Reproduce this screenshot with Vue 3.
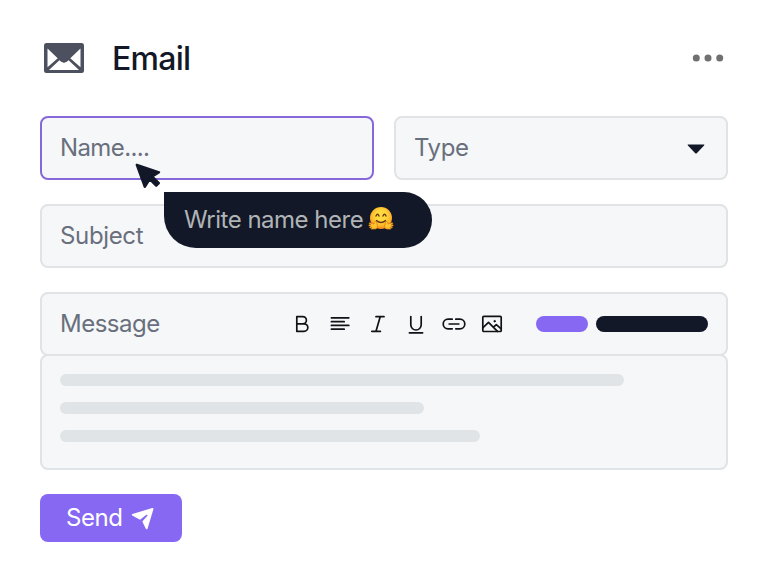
<script setup>
const lines = [564, 364, 420]
</script>

<template>
  <main class="page">
    <header class="header">
      <svg class="mail" width="40" height="30" viewBox="0 0 40 30">
        <rect width="40" height="30" rx="2.5" fill="#4c505f" />
        <path d="M3.5 5.4 13.7 15.2 3.5 24.2ZM36.5 5.4 26.3 15.2 36.5 24.2ZM5 27 15.4 17.2 17.6 18.9Q18.7 19 20 20 21.3 19 22.4 18.9L24.6 17.2 35 27Z" fill="#fff" />
      </svg>
      <h1>Email</h1>
      <svg class="more" width="32" height="8" viewBox="0 0 32 8" fill="#707070">
        <circle cx="4.3" cy="4" r="3.5" /><circle cx="16" cy="4" r="3.5" /><circle cx="27.7" cy="4" r="3.5" />
      </svg>
    </header>

    <div class="row">
      <div class="field active">
        <span class="name">Name....</span>
        <div class="hint">
          <svg class="cursor" width="28" height="28" viewBox="0 0 28 28">
            <path d="M2.8 2.8 25 10.3 18.3 14.6 24.8 21.1 22.2 23.7 15.7 17.2 10.8 24.8Z" fill="#121827" stroke="#121827" stroke-width="2.4" stroke-linejoin="round" />
          </svg>
          <div class="bubble">
            <span>Write name here</span>
            <svg width="26" height="26" viewBox="0 0 26 26">
              <defs>
                <radialGradient id="face" cx=".5" cy=".4" r=".6">
                  <stop offset=".4" stop-color="#ffd83e" /><stop offset=".75" stop-color="#ffb52b" /><stop offset="1" stop-color="#ed801b" />
                </radialGradient>
              </defs>
              <circle cx="13" cy="12" r="11" fill="url(#face)" />
              <path d="M8 10q1.5-3.4 3 0M15 10q1.5-3.4 3 0M8.5 14.6q4.5 3.8 9 0" fill="none" stroke="#6b3812" stroke-width="1.4" stroke-linecap="round" />
              <g fill="#ffc52e" stroke="#d97914" stroke-width=".7" stroke-linejoin="round">
                <path d="M7.5 15.5c-1.2-.1-1.1 1.2-1.7 2.5L2 16.8c-1-.2-1.2.7-.4 1.1l1.5.8-1.7.1c-1 .1-.9 1.1 0 1.2l1.8.2-1.3.7c-.7.6-.1 1.2.6 1l1.5-.3-.7.9c-.3.7.4 1 1 .6 2.1-.1 4.6.4 5.1-2.1.2-1.8-.8-5.4-1.9-5.5Z" />
                <path d="M18.5 15.5c1.2-.1 1.1 1.2 1.7 2.5l3.8-1.2c1-.2 1.2.7.4 1.1l-1.5.8 1.7.1c1 .1.9 1.1 0 1.2l-1.8.2 1.3.7c.7.6.1 1.2-.6 1l-1.5-.3.7.9c.3.7-.4 1-1 .6-2.1-.1-4.6.4-5.1-2.1-.2-1.8.8-5.4 1.9-5.5Z" />
              </g>
            </svg>
          </div>
        </div>
      </div>
      <div class="field">
        <span class="type">Type</span>
        <svg class="caret" width="18" height="10" viewBox="0 0 18 10"><path d="M1.2 .5H16.8Q18 .5 17.1 1.4L10 8.9Q9 9.9 8 8.9L.9 1.4Q0 .5 1.2 .5Z" fill="#121827" /></svg>
      </div>
    </div>

    <div class="field subject"><span>Subject</span></div>

    <section class="message">
      <div class="field">
        <span class="label">Message</span>
        <div class="tools">
          <svg viewBox="0 0 24 24"><path d="M6.8 4.6h6a3.6 3.6 0 0 1 0 7.2h-6ZM6.8 11.8h7.3a3.75 3.75 0 0 1 0 7.5H6.8Z" /></svg>
          <svg viewBox="0 0 24 24"><path d="M3.4 5.8h17.4M3.4 9.7h12.8M3.4 13.4h17.4M3.4 17.2h12.8" /></svg>
          <svg viewBox="0 0 24 24"><path d="M10 4.7h8M5.8 19.3h8.6M14.2 4.7 10 19.3" /></svg>
          <svg viewBox="0 0 24 24"><path d="M6.8 4.6v8.2a5.2 5.2 0 0 0 10.4 0V4.6M5.4 20.8h13.2" /></svg>
          <svg viewBox="0 0 24 24"><path d="M10.2 7.2H6a4.8 4.8 0 0 0 0 9.6h4.2M13.8 7.2H18a4.8 4.8 0 0 1 0 9.6h-4.2M7.2 12h9.6" /></svg>
          <svg viewBox="0 0 24 24"><rect x="2.8" y="4.3" width="18.4" height="15.2" rx="1" /><path d="m3 15.6 5.5-5.2 9 9M13.5 15.2l2.8-2.6 4.9 4.3" /><circle cx="14.6" cy="9.2" r=".8" class="dot" /></svg>
        </div>
        <i class="pill violet"></i>
        <i class="pill dark"></i>
      </div>
      <div class="body">
        <i v-for="width in lines" :key="width" :style="{ width: width + 'px' }"></i>
      </div>
    </section>

    <button class="send">
      <span>Send</span>
      <svg width="24" height="24" viewBox="0 0 24 24">
        <path d="M1.2 9.4Q.1 8.4 1.5 8L21.2 2Q22.8 1.6 22.4 3.2L16.6 22.4Q15.9 24 14.8 22.7L11.3 15.4 16.4 9.7Q16.9 8.4 15.4 8.8L9 13.7Z" fill="#fff" />
      </svg>
    </button>
  </main>
</template>

<style>
body { margin: 0; background: #fff; }
</style>

<style scoped>
* { box-sizing: border-box; }
svg { display: block; flex: none; }
.page { width: 768px; height: 574px; padding: 32px 40px; display: flex; flex-direction: column; font-family: Inter, "Liberation Sans", sans-serif; font-size: 24px; letter-spacing: -.42px; color: #6a6f7d; }
.header { height: 52px; padding: 0 4px; display: flex; align-items: center; margin-bottom: 32px; }
h1 { flex: 1; margin: 0 0 0 28px; padding-top: 2px; font-size: 32px; line-height: 40px; font-weight: 500; letter-spacing: -.75px; color: #121827; }
.row { display: flex; gap: 20px; margin-bottom: 24px; }
.row .field { flex: 1; }
.field { position: relative; height: 64px; padding: 0 18px; display: flex; align-items: center; border: 2px solid #e0e4e7; border-radius: 8px; background: #f5f7f9; line-height: 32px; }
.active { border-color: #8568da; }
.name { letter-spacing: -.6px; }
.caret { margin-left: auto; margin-right: 3px; margin-top: 2px; }
.subject { margin-bottom: 24px; }
.subject span { letter-spacing: -.35px; }
.hint { position: absolute; z-index: 1; left: 94px; top: 46px; }
.bubble { width: 268px; height: 56px; margin: 28px 0 0 28px; padding-left: 20px; display: flex; align-items: center; gap: 4.5px; background: #121827; color: #b0b4b6; border-radius: 0 28px 28px 32px; white-space: nowrap; }
.bubble span { letter-spacing: -.5px; }
.bubble svg { margin-bottom: 3px; }
.cursor { position: absolute; left: -2.2px; top: -2.2px; }
.label { width: 230px; letter-spacing: -.5px; }
.tools { display: flex; gap: 14px; margin-right: 32px; }
.tools svg { width: 24px; height: 24px; fill: none; stroke: #111217; stroke-width: 1.7; stroke-linecap: round; stroke-linejoin: round; }
.tools .dot { fill: #111217; stroke-width: .8; }
.pill { height: 16px; border-radius: 8px; }
.violet { width: 52px; margin-right: 8px; background: #8768f3; }
.dark { width: 112px; background: #121827; }
.body { height: 116px; margin-top: -2px; padding: 18px; display: flex; flex-direction: column; gap: 16px; border: 2px solid #e0e4e7; border-radius: 8px; background: #f5f7f9; }
.body i { height: 12px; border-radius: 6px; background: #e0e4e7; }
.send { width: 142px; height: 48px; margin-top: 24px; padding: 0 0 0 26px; display: flex; align-items: center; gap: 8.5px; border: 0; border-radius: 8px; background: #8768f3; color: #fff; font: inherit; letter-spacing: inherit; line-height: 32px; }
</style>
